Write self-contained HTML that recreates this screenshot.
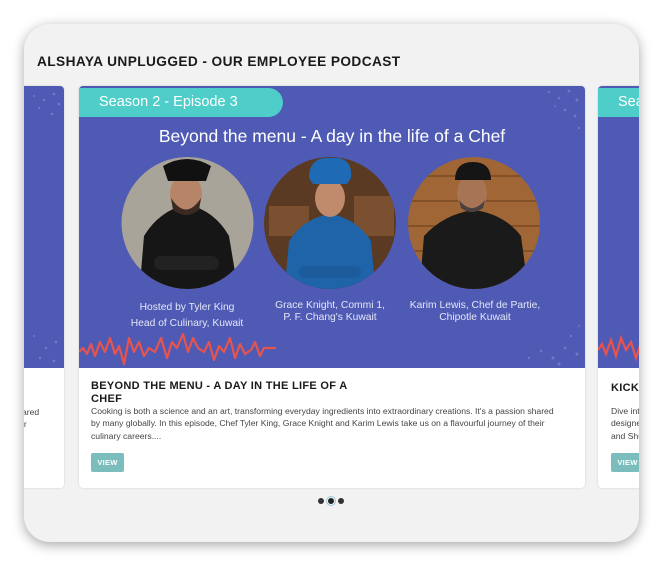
<!DOCTYPE html>
<html><head><style>
*{margin:0;padding:0;box-sizing:border-box}
body{width:663px;height:566px;background:#fff;font-family:"Liberation Sans",sans-serif;position:relative;overflow:hidden}
.panel{position:absolute;left:24px;top:24px;width:615px;height:518px;background:#f2f2f2;border-radius:26px;box-shadow:0 3px 12px rgba(0,0,0,.35);overflow:hidden}
h1{position:absolute;left:13px;top:30px;font-size:13.7px;font-weight:bold;color:#1a1a1a;letter-spacing:.4px}
.card{position:absolute;top:62px;height:402px;background:#fff;border-radius:4px;box-shadow:0 0 2px rgba(0,0,0,.15);overflow:hidden}
.img{position:absolute;left:0;top:0;width:100%;height:282px;background:#4f5ab5}
.t{position:absolute;color:#1a1a1a;font-weight:bold;font-size:11px;letter-spacing:.3px;line-height:13px}
.d{position:absolute;color:#444;font-size:8.6px;line-height:12.3px}
.btn{position:absolute;width:33px;height:19px;background:#7bbcbd;color:#fff;font-size:7.5px;font-weight:bold;text-align:center;line-height:19px;border-radius:2px;letter-spacing:.3px}
.cap{position:absolute;color:#e4e6f7;font-size:10.3px;text-align:center;line-height:12px}
</style></head><body>
<div class="panel">
<h1>ALSHAYA UNPLUGGED - OUR EMPLOYEE PODCAST</h1>
<div class="card" style="left:-60px;width:100px">
 <div class="img"><svg width="100" height="282"><g fill="#8a92d6" opacity=".6"><circle cx="70" cy="10" r="1"/><circle cx="80" cy="14" r="1.2"/><circle cx="90" cy="8" r="1.3"/><circle cx="75" cy="22" r="1"/><circle cx="88" cy="28" r="1.2"/><circle cx="95" cy="18" r="1.3"/><circle cx="70" cy="250" r="1"/><circle cx="82" cy="262" r="1.2"/><circle cx="92" cy="256" r="1.3"/><circle cx="76" cy="272" r="1.2"/><circle cx="90" cy="275" r="1.3"/></g></svg></div>
 <div class="d" style="left:58px;top:320px">ared<br>ir</div>
</div>
<div class="card" style="left:55px;width:506px">
 <div class="img">
 <svg width="506" height="282" style="position:absolute;left:0;top:0">
  <g fill="#8a92d6" opacity=".55">
   <circle cx="470" cy="6" r="1.2"/><circle cx="480" cy="12" r="1.3"/><circle cx="490" cy="5" r="1.4"/><circle cx="498" cy="14" r="1.5"/><circle cx="486" cy="24" r="1.3"/><circle cx="496" cy="30" r="1.4"/><circle cx="476" cy="20" r="1"/><circle cx="500" cy="42" r="1.2"/>
   <circle cx="450" cy="272" r="1.2"/><circle cx="462" cy="265" r="1.3"/><circle cx="474" cy="272" r="1.5"/><circle cx="486" cy="262" r="1.4"/><circle cx="498" cy="268" r="1.5"/><circle cx="492" cy="250" r="1.2"/><circle cx="480" cy="278" r="1.5"/><circle cx="500" cy="240" r="1"/>
  </g>
  <defs>
   <clipPath id="c1"><circle cx="108.5" cy="137" r="66"/></clipPath>
   <clipPath id="c2"><circle cx="251" cy="137" r="66"/></clipPath>
   <clipPath id="c3"><circle cx="395" cy="137" r="66"/></clipPath>
  </defs>
  <g clip-path="url(#c1)">
   <rect x="40" y="70" width="140" height="140" fill="#a9a49a"/>
   <path d="M60 210 L65 150 Q80 125 108 118 Q136 125 150 150 L160 210Z" fill="#161616"/>
   <ellipse cx="107" cy="108" rx="16" ry="20" fill="#b68466"/>
   <path d="M92 112 Q107 135 122 112 L120 124 Q107 134 94 124Z" fill="#3a2a22"/>
   <path d="M84 80 Q108 66 132 80 L127 95 L89 95Z" fill="#111"/>
   <rect x="75" y="170" width="65" height="14" rx="7" fill="#222"/>
  </g>
  <g clip-path="url(#c2)">
   <rect x="180" y="70" width="145" height="140" fill="#5a3a22"/>
   <rect x="190" y="120" width="40" height="30" fill="#7a5030"/><rect x="275" y="110" width="40" height="40" fill="#7a5030"/>
   <path d="M205 210 L210 155 Q225 132 251 128 Q277 132 292 155 L297 210Z" fill="#1f63a8"/>
   <ellipse cx="251" cy="112" rx="15" ry="19" fill="#c08a6c"/>
   <path d="M230 92 Q230 70 252 72 Q274 70 272 92 L268 98 L234 98Z" fill="#1f6ab5"/>
   <rect x="220" y="180" width="62" height="12" rx="6" fill="#1c5c9c"/>
  </g>
  <g clip-path="url(#c3)">
   <rect x="325" y="70" width="145" height="140" fill="#a06636"/>
   <g stroke="#7a4a22" stroke-width="1.5"><line x1="325" y1="90" x2="470" y2="90"/><line x1="325" y1="115" x2="470" y2="115"/><line x1="325" y1="140" x2="470" y2="140"/><line x1="325" y1="165" x2="470" y2="165"/><line x1="325" y1="190" x2="470" y2="190"/></g>
   <path d="M340 210 L345 150 Q365 128 395 124 Q425 128 442 150 L450 210Z" fill="#1a1a1a"/>
   <ellipse cx="393" cy="107" rx="15" ry="19" fill="#a87456"/>
   <path d="M380 114 Q393 130 406 114 L404 122 Q393 130 382 122Z" fill="#4a4040"/>
   <path d="M376 94 Q376 76 394 76 Q412 76 412 94Z" fill="#151515"/>
  </g>
  <path d="M0 266 L4 262 L8 268 L12 258 L16 270 L21 256 L26 266 L31 252 L36 268 L40 260 L45 278 L50 252 L55 266 L60 256 L65 270 L70 262 L76 266 L82 252 L88 272 L93 256 L98 262 L104 248 L109 266 L114 252 L119 262 L125 266 L130 256 L135 274 L140 260 L145 266 L151 252 L156 272 L161 258 L166 268 L172 264 L176 256 L181 270 L185 262 L190 262 L197 262" fill="none" stroke="#e8544c" stroke-width="2.2" stroke-linejoin="round"/>
 </svg>
 <div style="position:absolute;left:0;top:2px;width:204px;height:29px;background:#4ecdc9;border-radius:0 15px 15px 0;color:#fff;font-size:14.5px;line-height:29px;padding-left:20px">Season 2 - Episode 3</div>
 <div style="position:absolute;left:0;width:506px;top:40px;text-align:center;color:#fff;font-size:17.5px">Beyond the menu - A day in the life of a Chef</div>
 <div class="cap" style="left:28px;top:214px;width:160px;line-height:16px">Hosted by Tyler King<br>Head of Culinary, Kuwait</div>
 <div class="cap" style="left:172px;top:214px;width:158px">Grace Knight, Commi 1,<br>P. F. Chang's Kuwait</div>
 <div class="cap" style="left:318px;top:214px;width:156px">Karim Lewis, Chef de Partie,<br>Chipotle Kuwait</div>
 </div>
 <div class="t" style="left:12px;top:294px;width:280px">BEYOND THE MENU - A DAY IN THE LIFE OF A CHEF</div>
 <div class="d" style="left:12px;top:319px;width:474px">Cooking is both a science and an art, transforming everyday ingredients into extraordinary creations. It's a passion shared by many globally. In this episode, Chef Tyler King, Grace Knight and Karim Lewis take us on a flavourful journey of their culinary careers....</div>
 <div class="btn" style="left:12px;top:367px">VIEW</div>
</div>
<div class="card" style="left:574px;width:100px">
 <div class="img">
  <div style="position:absolute;left:0;top:2px;width:100px;height:29px;background:#4ecdc9;color:#fff;font-size:14.5px;line-height:29px;padding-left:20px">Season</div>
  <svg width="100" height="282" style="position:absolute;left:0;top:0"><path d="M0 264 L4 258 L8 268 L13 254 L18 270 L23 252 L28 264 L33 256 L38 272 L42 260" fill="none" stroke="#e8544c" stroke-width="2.2"/></svg>
 </div>
 <div class="t" style="left:13px;top:296px">KICKSTART</div>
 <div class="d" style="left:13px;top:319px">Dive into<br>designed<br>and Shu</div>
 <div class="btn" style="left:13px;top:367px">VIEW</div>
</div>
<div style="position:absolute;left:294px;top:474px;width:6px;height:6px;border-radius:50%;background:#333"></div>
<div style="position:absolute;left:302px;top:472px;width:10px;height:10px;border-radius:50%;border:1px solid #9cd;background:#f2f2f2"></div>
<div style="position:absolute;left:304px;top:474px;width:6px;height:6px;border-radius:50%;background:#222"></div>
<div style="position:absolute;left:314px;top:474px;width:6px;height:6px;border-radius:50%;background:#333"></div>
</div>
</body></html>
